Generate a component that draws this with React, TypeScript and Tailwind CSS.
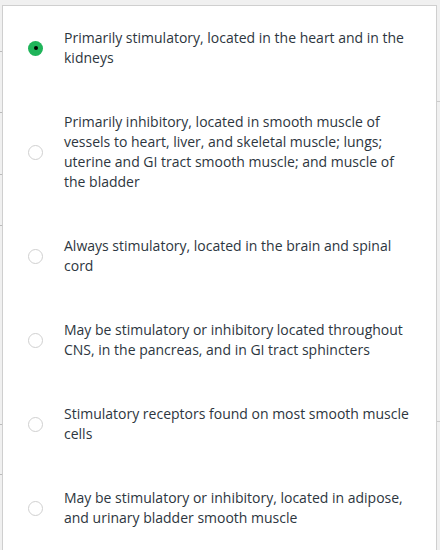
import React from "react";

const options = [
  "Primarily stimulatory, located in the heart and in the kidneys",
  "Primarily inhibitory, located in smooth muscle of vessels to heart, liver, and skeletal muscle; lungs; uterine and GI tract smooth muscle; and muscle of the bladder",
  "Always stimulatory, located in the brain and spinal cord",
  "May be stimulatory or inhibitory located throughout CNS, in the pancreas, and in GI tract sphincters",
  "Stimulatory receptors found on most smooth muscle cells",
  "May be stimulatory or inhibitory, located in adipose, and urinary bladder smooth muscle",
];

const leftSegments = [52, 61, 62, 51, 199, 50];
const rightSegments = [102, 320];

export default function App() {
  return (
    <div
      className="flex w-[440px] h-[550px] overflow-hidden bg-[#f0f0f0]"
      style={{ fontFamily: '"Open Sans", "Noto Sans", sans-serif' }}
    >
      <div className="flex flex-col w-[2px] shrink-0">
        {leftSegments.map((h, i) => (
          <div key={i} className="shrink-0 border-b border-[#bbb]" style={{ height: h }} />
        ))}
      </div>

      <div className="mt-[5px] w-[435px] h-[560px] shrink-0 bg-white border border-[#cfcfcf]">
        {options.map((text, i) => (
          <div key={i} className="flex items-center py-[22px] pl-[25px]">
            {i === 0 ? (
              <span className="flex items-center justify-center w-[15px] h-[15px] rounded-full bg-[#1fb45a] shrink-0">
                <span className="block w-[4px] h-[4px] rounded-full bg-black" />
              </span>
            ) : (
              <span className="block w-[15px] h-[15px] rounded-full border border-[#d0d0d0] bg-white shrink-0" />
            )}
            <div className="ml-[21px] w-[350px] text-[14px] leading-[20px] text-[#2d3640]">
              {text}
            </div>
          </div>
        ))}
      </div>

      <div className="flex flex-col w-[3px] shrink-0">
        {rightSegments.map((h, i) => (
          <div key={i} className="shrink-0 border-b border-[#ccc]" style={{ height: h }} />
        ))}
      </div>
    </div>
  );
}
